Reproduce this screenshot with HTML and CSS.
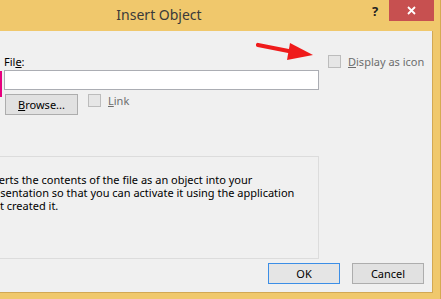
FILE: index.html
```html
<!DOCTYPE html>
<html lang="en">
<head>
    <meta charset="UTF-8">
    <meta name="viewport" content="width=device-width, initial-scale=1.0">
    <title>Insert Object</title>
    <link rel="stylesheet" href="styles.css">
</head>
<body>
    <div class="window">
        <div class="titlebar">
            <span class="title">Insert Object</span>
            <span class="help">?</span>
            <button class="close" aria-label="Close">
                <svg width="9" height="9" viewBox="0 0 9 9">
                    <path d="M1 1 L8 8 M8 1 L1 8" stroke="#fff" stroke-width="1.8" fill="none"/>
                </svg>
            </button>
        </div>
        <div class="client">
            <div class="top-row">
                <div class="sources">
                    <label class="radio"><span class="dot"></span>Create <u>n</u>ew</label>
                    <label class="radio checked"><span class="dot"></span>Create from <u>f</u>ile</label>
                </div>
                <div class="fields">
                    <label for="file" class="field-label">Fil<u>e</u>:</label>
                    <input type="text" id="file" class="file-input">
                    <div class="browse-row">
                        <button class="btn browse"><u>B</u>rowse...</button>
                        <label class="check disabled"><span class="box"></span><span><u>L</u>ink</span></label>
                    </div>
                </div>
                <div class="options">
                    <label class="check disabled"><span class="box"></span><span><u>D</u>isplay as icon</span></label>
                </div>
            </div>
            <div class="result">
                <div class="result-icon"></div>
                <p class="result-text">Inserts the contents of the file as an object into your presentation so that you can activate it using the application that created it.</p>
            </div>
            <div class="actions">
                <button class="btn default">OK</button>
                <button class="btn">Cancel</button>
            </div>
            <!-- annotation marks drawn over the dialog -->
            <span class="marker"></span>
            <svg class="arrow" width="62" height="24" viewBox="0 0 62 24">
                <path d="M3 5 L36 11.5" stroke="#ef1b1b" stroke-width="4.2" stroke-linecap="round"/>
                <polygon points="35,3 58,15 32,20" fill="#ef1b1b"/>
            </svg>
        </div>
    </div>
</body>
</html>
```

FILE: styles.css
```css
html, body {
    margin: 0;
    padding: 0;
    overflow: hidden;
}
body {
    font-family: "Noto Sans", "Liberation Sans", sans-serif;
    font-size: 11px;
    color: #000;
    background: #f0c86c;
}
.window {
    width: 561px;
    height: 300px;
    margin-left: -120px;
    box-sizing: border-box;
    background: #f0c86c;
    border: 1px solid #d6aa52;
    border-top: none;
    display: flex;
    flex-direction: column;
}
.titlebar {
    height: 31px;
    flex-shrink: 0;
    display: flex;
    align-items: flex-start;
    padding-right: 6px;
}
.title {
    flex: 1;
    padding-left: 76px;
    text-align: center;
    font-size: 14px;
    line-height: 15px;
    margin-top: 7px;
    color: #3a3a3a;
}
.help {
    width: 28px;
    text-align: center;
    font-weight: bold;
    font-size: 13px;
    line-height: 13px;
    margin-top: 5px;
    color: #222;
}
.close {
    width: 45px;
    height: 21px;
    margin: 0;
    padding: 0;
    border: none;
    background: #c75050;
    display: flex;
    align-items: center;
    justify-content: center;
}
.client {
    position: relative;
    margin: 0 7px;
    height: 262px;
    flex-shrink: 0;
    box-sizing: border-box;
    background: #f0f0f0;
    border-right: 1px solid #d2a854;
    border-bottom: 1px solid #d2a854;
    padding: 23px 8px 8px 10px;
    display: flex;
    flex-direction: column;
}
.top-row {
    display: flex;
    height: 61px;
}
.sources {
    width: 106px;
    flex-shrink: 0;
    box-sizing: border-box;
    padding: 2px 0 0 0;
    display: flex;
    flex-direction: column;
    gap: 20px;
    font-size: 10px;
    white-space: nowrap;
    overflow: hidden;
}
.radio {
    display: flex;
    align-items: center;
    gap: 4px;
    line-height: 15px;
}
.dot {
    width: 11px;
    height: 11px;
    border: 1px solid #707070;
    border-radius: 50%;
    background: #fff;
}
.fields {
    width: 315px;
    flex-shrink: 0;
    display: flex;
    flex-direction: column;
}
.field-label {
    line-height: 15px;
    margin-bottom: 1px;
}
.file-input {
    width: 315px;
    height: 20px;
    box-sizing: border-box;
    margin: 0;
    border: 1px solid #abadb3;
    background: #fff;
    font: inherit;
}
.browse-row {
    display: flex;
    align-items: flex-start;
    margin-top: 4px;
}
.btn {
    width: 72px;
    height: 21px;
    flex-shrink: 0;
    box-sizing: border-box;
    margin: 0;
    padding: 0;
    border: 1px solid #adadad;
    background: #e1e1e1;
    font: inherit;
    color: #000;
    line-height: 17px;
}
.btn.browse {
    width: 73px;
    margin-left: 1px;
}
.btn.default {
    border-color: #3c8ee6;
    background: #e5e5e5;
}
.check {
    display: flex;
    align-items: flex-start;
    gap: 7px;
    line-height: 13px;
    white-space: nowrap;
}
.browse-row .check {
    margin-left: 10px;
}
.check.disabled {
    color: #6d6d6d;
}
.box {
    width: 13px;
    height: 13px;
    flex-shrink: 0;
    box-sizing: border-box;
    border: 1px solid #bcbcbc;
    background: #e6e6e6;
}
.options {
    margin-left: 9px;
    padding-top: 1px;
}
.result {
    margin-top: 41px;
    margin-left: 2px;
    width: 419px;
    height: 103px;
    flex-shrink: 0;
    box-sizing: border-box;
    border: 1px solid #dcdcdc;
    display: flex;
    align-items: flex-start;
    padding: 16px 0 0 18px;
}
.result-icon {
    width: 32px;
    height: 32px;
    flex-shrink: 0;
    margin-right: 32px;
}
.result-text {
    margin: 0;
    width: 312px;
    line-height: 13px;
}
.actions {
    margin-top: 4px;
    display: flex;
    justify-content: flex-end;
    gap: 12px;
}
.marker {
    position: absolute;
    left: 112px;
    top: 40px;
    width: 2px;
    height: 26px;
    background: #e6007e;
}
.arrow {
    position: absolute;
    left: 367px;
    top: 9px;
}
```
